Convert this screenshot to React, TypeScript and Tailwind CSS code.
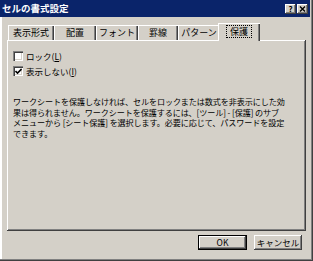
const FONT = "font-['Noto_Sans_CJK_JP','Liberation_Sans',sans-serif]";

const TABS = [
  { label: '表示形式', w: 'w-[46px]' },
  { label: '配置', w: 'w-[42px]' },
  { label: 'フォント', w: 'w-[42px]' },
  { label: '罫線', w: 'w-[40px]' },
  { label: 'パターン', w: 'w-[42px]' },
];

const RAISED = 'shadow-[inset_-1px_-1px_#404040,inset_1px_1px_#ffffff,inset_-2px_-2px_#808080]';
const SUNKEN = 'shadow-[inset_1px_1px_#808080,inset_2px_2px_#404040,inset_-1px_-1px_#ffffff,inset_-2px_-2px_#d4d0c8]';

function CheckBox({ checked }: { checked: boolean }) {
  return (
    <div className={`w-[10px] h-[10px] bg-white flex items-center justify-center ${SUNKEN}`}>
      {checked && (
        <svg width="7" height="7" viewBox="0 0 7 7">
          <path d="M0.5 3 L2.5 5 L6.5 1" stroke="#000" strokeWidth="1.6" fill="none" />
        </svg>
      )}
    </div>
  );
}

function CaptionButton({ children }: { children: React.ReactNode }) {
  return (
    <div className={`w-[11px] h-[10px] bg-[#d4d0c8] flex items-center justify-center ${RAISED}`}>
      {children}
    </div>
  );
}

export default function App() {
  return (
    <div className={`w-[313px] h-[261px] bg-[#d4d0c8] flex flex-col pr-[3px] pb-[2px] text-black ${FONT} shadow-[inset_-1px_-1px_#404040,inset_-2px_-2px_#808080]`}>
      {/* Title bar */}
      <div className="h-[17px] bg-[#0a246a] flex items-center pl-[2px] pr-[2px]">
        <span className="text-white font-bold text-[9.5px] leading-none">セルの書式設定</span>
        <div className="ml-auto flex gap-[1px]">
          <CaptionButton>
            <span className="text-[8px] font-bold leading-none">?</span>
          </CaptionButton>
          <CaptionButton>
            <svg width="7" height="6" viewBox="0 0 7 6">
              <path d="M1 0.5 L6 5.5 M6 0.5 L1 5.5" stroke="#000" strokeWidth="1.4" />
            </svg>
          </CaptionButton>
        </div>
      </div>

      <div className="flex-1 flex flex-col pl-[7px] pr-[4px] shadow-[inset_2px_0_#ffffff]">
        {/* Tabs */}
        <div className="flex items-end h-[17px] mt-[6px] pl-[1px]">
          {TABS.map((tab) => (
            <div key={tab.label}
              className={`${tab.w} h-[15px] flex items-center justify-center text-[9px] leading-none shadow-[inset_1px_1px_#ffffff,inset_-1px_0_#404040,inset_-2px_0_#808080]`}>
              {tab.label}
            </div>
          ))}
          <div className="relative z-10 -ml-[2px] -mb-[1px] w-[42px] h-[18px] bg-[#d4d0c8] flex items-center justify-center shadow-[inset_1px_1px_#ffffff,inset_-1px_0_#404040,inset_-2px_0_#808080]">
            <span className="text-[9px] leading-none px-[3px] py-[1px] outline outline-1 outline-dotted outline-black -mt-[1px]">保護</span>
          </div>
        </div>

        {/* Panel */}
        <div className={`h-[191px] pl-[6px] pt-[11px] ${RAISED}`}>
          <div className="flex items-center gap-[3px] h-[10px]">
            <CheckBox checked={false} />
            <span className="text-[8.5px] leading-none">ロック(<u>L</u>)</span>
          </div>
          <div className="flex items-center gap-[3px] h-[10px] mt-[5px]">
            <CheckBox checked={true} />
            <span className="text-[8.5px] leading-none">表示しない(<u>I</u>)</span>
          </div>
          <p className="mt-[21px] text-[8.1px] leading-[10.5px] whitespace-nowrap tracking-[-0.1px]">
            ワークシートを保護しなければ、セルをロックまたは数式を非表示にした効<br />
            果は得られません。ワークシートを保護するには、[ツール] - [保護] のサブ<br />
            メニューから [シート保護] を選択します。必要に応じて、パスワードを設定<br />
            できます。
          </p>
        </div>

        {/* Buttons */}
        <div className="flex justify-end gap-[7px] mt-[4px] pr-[4px]">
          <div className="w-[49px] h-[15px] border border-black">
            <div className={`w-full h-full flex items-center justify-center text-[8.5px] leading-none ${RAISED}`}>OK</div>
          </div>
          <div className={`w-[48px] h-[15px] flex items-center justify-center text-[8.5px] leading-none ${RAISED}`}>キャンセル</div>
        </div>
      </div>
    </div>
  );
}
